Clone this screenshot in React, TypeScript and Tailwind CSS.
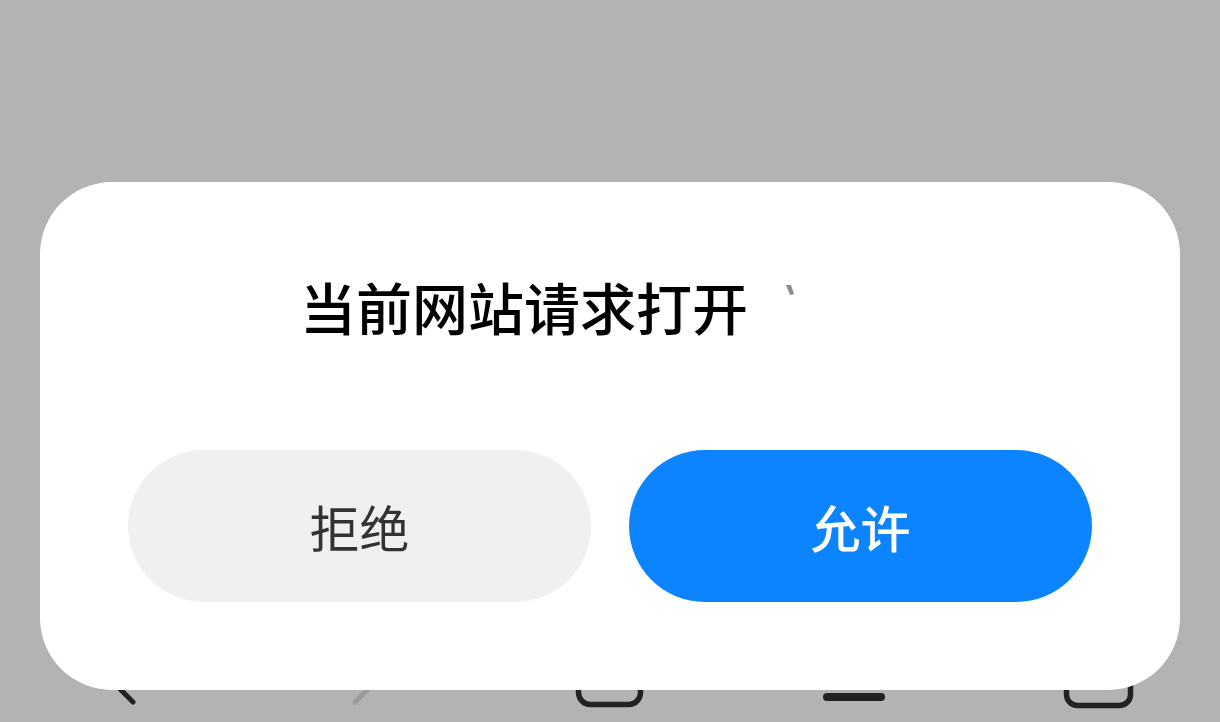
const CJK = "font-['Noto_Sans_CJK_SC','Noto_Sans',sans-serif]";

function BackIcon() {
  return (
    <svg width="72" height="60" viewBox="0 0 72 60" fill="none">
      <polyline points="47,2 22,25 47,50" stroke="#222222" strokeWidth="5" strokeLinecap="round" strokeLinejoin="round" />
    </svg>
  );
}

function ForwardIcon() {
  return (
    <svg width="72" height="60" viewBox="0 0 72 60" fill="none">
      <polyline points="25,2 50,25 25,50" stroke="#9a9a9a" strokeWidth="5" strokeLinecap="round" strokeLinejoin="round" />
    </svg>
  );
}

function HomeIcon() {
  return (
    <svg width="72" height="60" viewBox="0 0 72 60" fill="none">
      <rect x="4.5" y="4" width="62" height="48.5" rx="12" stroke="#222222" strokeWidth="5.5" />
    </svg>
  );
}

function MenuIcon() {
  return (
    <svg width="72" height="60" viewBox="0 0 72 60" fill="#222222">
      <rect x="5" y="5" width="62" height="8" rx="4" />
      <rect x="5" y="23" width="62" height="8" rx="4" />
      <rect x="5" y="41" width="62" height="8" rx="4" />
    </svg>
  );
}

function TabsIcon() {
  return (
    <svg width="72" height="60" viewBox="0 0 72 60" fill="none">
      <rect x="4.5" y="6" width="64" height="47.5" rx="11" stroke="#222222" strokeWidth="5.5" />
    </svg>
  );
}

export default function App() {
  return (
    <div className={`relative h-[722px] w-[1220px] overflow-hidden bg-[#b3b3b3] ${CJK}`}>
      {/* browser toolbar behind the sheet */}
      <div className="flex h-full flex-col justify-end">
        <nav className="grid h-[70px] grid-cols-5">
          <div className="flex justify-center"><BackIcon /></div>
          <div className="flex justify-center"><ForwardIcon /></div>
          <div className="flex justify-center"><HomeIcon /></div>
          <div className="flex justify-center"><MenuIcon /></div>
          <div className="flex justify-center"><TabsIcon /></div>
        </nav>
      </div>

      {/* permission dialog */}
      <div className="absolute left-[40px] top-[182px] flex h-[508px] w-[1140px] flex-col rounded-[72px] bg-white pb-[88px] pt-[96px]">
        <div className="flex items-start pl-[260px]">
          <h2 className="text-[56px] font-medium leading-none text-black">当前网站请求打开</h2>
          <svg className="ml-[38px] mt-[7px]" width="8" height="11" viewBox="0 0 8 11">
            <polygon points="0,0 5,0 8,9 4,10" fill="#8c8c8c" />
          </svg>
        </div>

        <div className="mt-auto flex gap-[38px] px-[88px]">
          <button className="flex h-[152px] flex-1 items-center justify-center rounded-full bg-[#f0f0f0] text-[50px] leading-none text-[#333333]">
            拒绝
          </button>
          <button className="flex h-[152px] flex-1 items-center justify-center rounded-full bg-[#0d84ff] text-[50px] font-medium leading-none text-white">
            允许
          </button>
        </div>
      </div>
    </div>
  );
}
